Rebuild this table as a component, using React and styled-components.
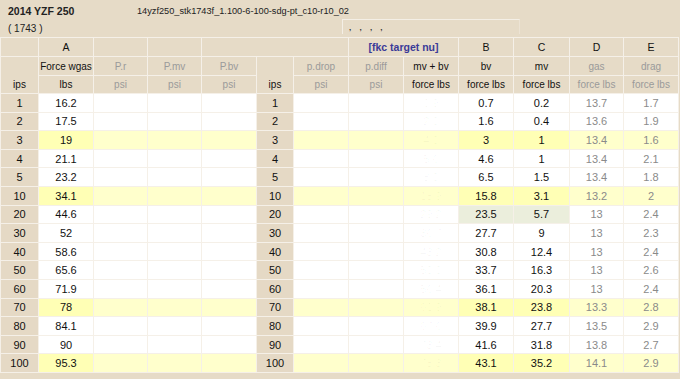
import React from 'react'
import styled, { createGlobalStyle } from 'styled-components'

const GlobalStyle = createGlobalStyle`
  body {
    margin: 0;
    background: #e6dbc7;
    font-family: "Liberation Sans", Arial, sans-serif;
  }
`

const rows = [
  { ips: 1, a: '16.2', bv: '0.7', mv: '0.2', gas: '13.7', drag: '1.7' },
  { ips: 2, a: '17.5', bv: '1.6', mv: '0.4', gas: '13.6', drag: '1.9' },
  { ips: 3, a: '19', bv: '3', mv: '1', gas: '13.4', drag: '1.6', hot: true },
  { ips: 4, a: '21.1', bv: '4.6', mv: '1', gas: '13.4', drag: '2.1' },
  { ips: 5, a: '23.2', bv: '6.5', mv: '1.5', gas: '13.4', drag: '1.8' },
  { ips: 10, a: '34.1', bv: '15.8', mv: '3.1', gas: '13.2', drag: '2', hot: true },
  { ips: 20, a: '44.6', bv: '23.5', mv: '5.7', gas: '13', drag: '2.4', target: true },
  { ips: 30, a: '52', bv: '27.7', mv: '9', gas: '13', drag: '2.3' },
  { ips: 40, a: '58.6', bv: '30.8', mv: '12.4', gas: '13', drag: '2.4' },
  { ips: 50, a: '65.6', bv: '33.7', mv: '16.3', gas: '13', drag: '2.6' },
  { ips: 60, a: '71.9', bv: '36.1', mv: '20.3', gas: '13', drag: '2.4' },
  { ips: 70, a: '78', bv: '38.1', mv: '23.8', gas: '13.3', drag: '2.8', hot: true },
  { ips: 80, a: '84.1', bv: '39.9', mv: '27.7', gas: '13.5', drag: '2.9' },
  { ips: 90, a: '90', bv: '41.6', mv: '31.8', gas: '13.8', drag: '2.7' },
  { ips: 100, a: '95.3', bv: '43.1', mv: '35.2', gas: '14.1', drag: '2.9', hot: true },
]

const widths = [37, 54, 53, 53, 54, 36, 54, 54, 54, 54, 55, 53, 54]

const tones = {
  plain: '#ffffff',
  light: '#ffffcc',
  dark: '#ffffb5',
  green: '#ebeedc',
}

function App() {
  return (
    <>
      <GlobalStyle />
      <Header>
        <TopLine>
          <Title>2014 YZF 250</Title>
          <FileName>14yzf250_stk1743f_1.100-6-100-sdg-pt_c10-r10_02</FileName>
        </TopLine>
        <SubLine>
          <Count>( 1743 )</Count>
          <CommentBox>, , , ,</CommentBox>
        </SubLine>
      </Header>

      <Grid>
        <colgroup>
          {widths.map((w, i) => <col key={i} style={{ width: w }} />)}
        </colgroup>
        <thead>
          <tr>
            <Th $h={18}></Th>
            <Th $h={18} $letter>A</Th>
            <Th></Th>
            <Th></Th>
            <Th colSpan={3}></Th>
            <Th colSpan={2} $accent>[fkc target nu]</Th>
            <Th $letter>B</Th>
            <Th $letter>C</Th>
            <Th $letter>D</Th>
            <Th $letter>E</Th>
          </tr>
          <tr>
            <Th rowSpan={2} $ips>ips</Th>
            <Th $h={18}>Force wgas</Th>
            <Th $muted>P.r</Th>
            <Th $muted>P.mv</Th>
            <Th $muted>P.bv</Th>
            <Th rowSpan={2} $ips>ips</Th>
            <Th $muted>p.drop</Th>
            <Th $muted>p.diff</Th>
            <Th>mv + bv</Th>
            <Th>bv</Th>
            <Th>mv</Th>
            <Th $muted>gas</Th>
            <Th $muted>drag</Th>
          </tr>
          <tr>
            <Th $h={17}>lbs</Th>
            <Th $muted>psi</Th>
            <Th $muted>psi</Th>
            <Th $muted>psi</Th>
            <Th $muted>psi</Th>
            <Th $muted>psi</Th>
            <Th>force lbs</Th>
            <Th>force lbs</Th>
            <Th>force lbs</Th>
            <Th $muted>force lbs</Th>
            <Th $muted>force lbs</Th>
          </tr>
        </thead>
        <tbody>
          {rows.map((r) => {
            const light = r.hot ? 'light' : 'plain'
            const strong = r.hot ? 'dark' : r.target ? 'green' : 'plain'
            const sum = (parseFloat(r.bv) + parseFloat(r.mv)).toFixed(1)
            return (
              <tr key={r.ips}>
                <Ips>{r.ips}</Ips>
                <Td $tone={r.hot ? 'dark' : 'plain'}>{r.a}</Td>
                <Td $tone={light}></Td>
                <Td $tone={light}></Td>
                <Td $tone={light}></Td>
                <Ips>{r.ips}</Ips>
                <Td $tone={light}></Td>
                <Td $tone={light}></Td>
                <Td $tone={light} $ghost>{sum}</Td>
                <Td $tone={strong}>{r.bv}</Td>
                <Td $tone={strong}>{r.mv}</Td>
                <Td $tone={light} $muted>{r.gas}</Td>
                <Td $tone={light} $muted>{r.drag}</Td>
              </tr>
            )
          })}
        </tbody>
      </Grid>
    </>
  )
}

const Header = styled.div`
  padding: 4px 0 0 8px;
  height: 33px;
`

const TopLine = styled.div`
  display: flex;
  align-items: center;
  height: 13px;
`

const Title = styled.div`
  width: 129px;
  font-size: 10.5px;
  font-weight: bold;
  color: #222;
`

const FileName = styled.div`
  font-size: 9.2px;
  color: #222;
`

const SubLine = styled.div`
  display: flex;
  align-items: center;
  margin-top: 2px;
  height: 15px;
`

const Count = styled.div`
  width: 334px;
  font-size: 10px;
  color: #222;
  padding-top: 3px;
`

const CommentBox = styled.div`
  box-sizing: border-box;
  width: 178px;
  height: 15px;
  border-top: 1px solid #f4efe6;
  border-left: 1px solid #f4efe6;
  border-right: 1px solid #ece3d4;
  font-size: 8px;
  font-weight: bold;
  color: #333;
  padding: 3px 0 0 6px;
  letter-spacing: 3px;
`

const Grid = styled.table`
  table-layout: fixed;
  border-collapse: separate;
  border-spacing: 1px;
  background: #f5f0e8;
  width: 679px;
`

const Th = styled.th`
  height: ${(p) => (p.$h ? `${p.$h}px` : 'auto')};
  padding: 0;
  background: #e6dbc7;
  font-weight: ${(p) => (p.$accent ? 'bold' : 'normal')};
  font-size: ${(p) => (p.$letter || p.$accent ? '10.5px' : '10px')};
  color: ${(p) => (p.$accent ? '#3a3a98' : p.$muted ? '#9a9a9a' : '#111')};
  text-align: center;
  vertical-align: ${(p) => (p.$ips ? 'bottom' : 'middle')};
  padding-bottom: ${(p) => (p.$ips ? '3px' : '0')};
  white-space: nowrap;
  overflow: hidden;
`

const Ips = styled.td`
  height: 17.6px;
  padding: 0;
  background: #e5d9c5;
  font-size: 11px;
  color: #111;
  text-align: center;
`

const Td = styled.td`
  height: 17.6px;
  padding: 0;
  background: ${(p) => tones[p.$tone]};
  font-size: 11px;
  color: ${(p) => (p.$ghost ? 'rgba(0, 0, 0, 0.035)' : p.$muted ? '#8a8a8a' : '#111')};
  text-align: center;
`

export default App
